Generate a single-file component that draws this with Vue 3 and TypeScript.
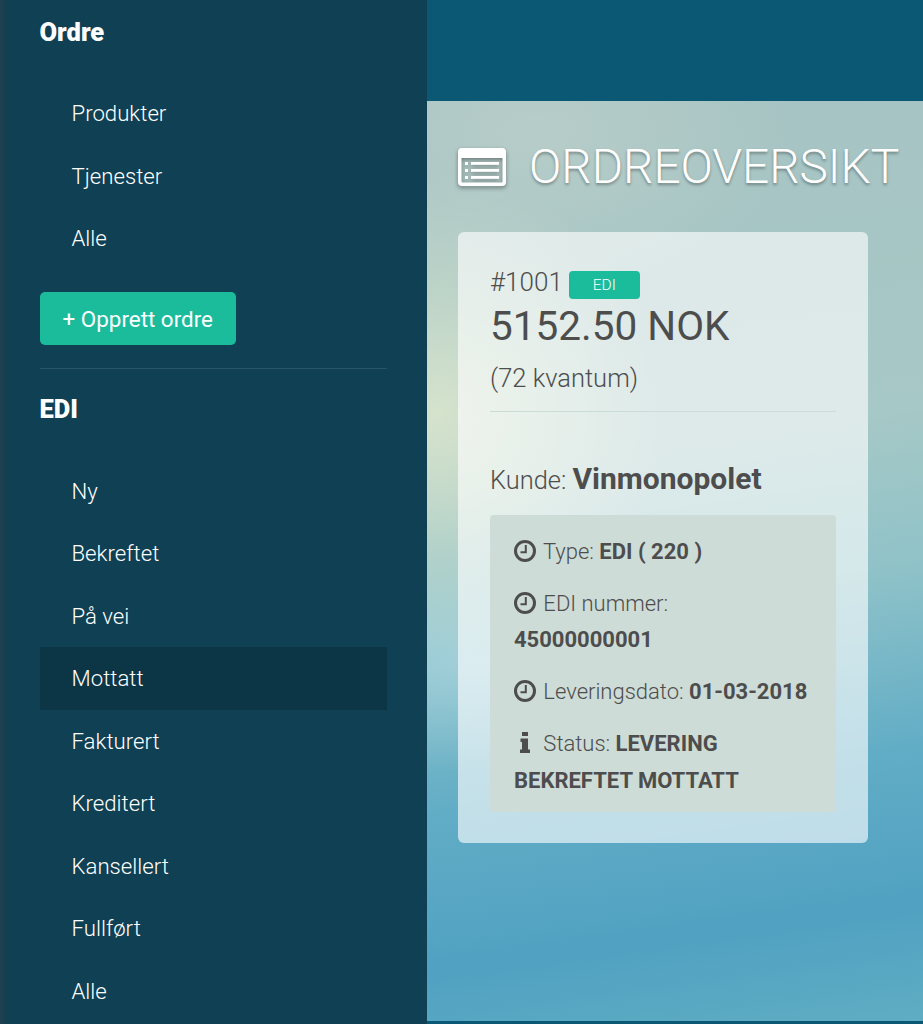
<script setup lang="ts">
const orderLinks = ["Produkter", "Tjenester", "Alle"];
const ediLinks = ["Ny", "Bekreftet", "På vei", "Mottatt", "Fakturert", "Kreditert", "Kansellert", "Fullført", "Alle"];
const activeLink = "Mottatt";
</script>

<template>
  <div class="layout">
    <aside class="sidebar">
      <h3 class="side-title first">Ordre</h3>
      <ul class="nav">
        <li v-for="link in orderLinks" :key="link"><a>{{ link }}</a></li>
      </ul>
      <button class="create-btn" type="button">+ Opprett ordre</button>
      <hr class="side-rule" />
      <h3 class="side-title">EDI</h3>
      <ul class="nav">
        <li v-for="link in ediLinks" :key="link" :class="{ active: link === activeLink }"><a>{{ link }}</a></li>
      </ul>
    </aside>

    <div class="main">
      <div class="topbar"></div>
      <div class="content">
        <h1 class="page-title">
          <svg class="title-icon" viewBox="0 0 48 38" aria-hidden="true">
            <path fill="#fff" fill-rule="evenodd" d="M4 0h40a4 4 0 0 1 4 4v30a4 4 0 0 1-4 4H4a4 4 0 0 1-4-4V4a4 4 0 0 1 4-4zM3.500 10v23.500a1 1 0 0 0 1 1h39a1 1 0 0 0 1-1V10z" />
            <rect x="7" y="14" width="3" height="3" fill="#fff" />
            <rect x="7" y="21" width="3" height="3" fill="#fff" />
            <rect x="7" y="28" width="3" height="3" fill="#fff" />
            <rect x="13" y="14" width="28" height="2.800" fill="#fff" />
            <rect x="13" y="21" width="28" height="2.800" fill="#fff" />
            <rect x="13" y="28" width="28" height="2.800" fill="#fff" />
          </svg>
          <span>ORDREOVERSIKT</span>
        </h1>

        <section class="card">
          <div class="order-no">#1001 <span class="badge">EDI</span></div>
          <div class="amount">5152.50 NOK</div>
          <div class="quantity">(72 kvantum)</div>
          <hr class="card-rule" />
          <div class="customer">Kunde: <strong>Vinmonopolet</strong></div>

          <div class="details">
            <p>
              <svg class="icon" viewBox="0 0 22 22" aria-hidden="true">
                <circle cx="11" cy="11" r="9.500" fill="none" stroke="currentColor" stroke-width="3" />
                <path d="M11.800 5v7.300H6.500" fill="none" stroke="currentColor" stroke-width="2" />
              </svg>
              Type: <strong>EDI ( 220 )</strong>
            </p>
            <p>
              <svg class="icon" viewBox="0 0 22 22" aria-hidden="true">
                <circle cx="11" cy="11" r="9.500" fill="none" stroke="currentColor" stroke-width="3" />
                <path d="M11.800 5v7.300H6.500" fill="none" stroke="currentColor" stroke-width="2" />
              </svg>
              EDI nummer:<br /><strong>45000000001</strong>
            </p>
            <p>
              <svg class="icon" viewBox="0 0 22 22" aria-hidden="true">
                <circle cx="11" cy="11" r="9.500" fill="none" stroke="currentColor" stroke-width="3" />
                <path d="M11.800 5v7.300H6.500" fill="none" stroke="currentColor" stroke-width="2" />
              </svg>
              Leveringsdato: <strong>01-03-2018</strong>
            </p>
            <p>
              <svg class="icon" viewBox="0 0 22 22" aria-hidden="true">
                <path fill="currentColor" d="M8 0h6v4H8zM6.500 6.500H14V17.500h2V21H6v-3.500h2v-7.500H6.500z" />
              </svg>
              Status: <strong>LEVERING BEKREFTET MOTTATT</strong>
            </p>
          </div>
        </section>
      </div>
    </div>
  </div>
</template>

<style scoped>
.layout {
  display: flex;
  height: 1024px;
  overflow: hidden;
  font-family: Roboto, "Liberation Sans", sans-serif;
}

.sidebar {
  width: 427px;
  flex-shrink: 0;
  box-sizing: border-box;
  padding: 0 40px 0 39.500px;
  color: #fff;
  background: linear-gradient(to right, #23404f 0, #12404f 6px, #0f4054 12px);
}

.side-title {
  margin: 0;
  font-size: 25.500px;
  font-weight: 900;
  line-height: 32px;
  padding: 24px 0 35px;
}

.side-title.first {
  padding-top: 16px;
  padding-bottom: 34px;
}

.nav {
  list-style: none;
  margin: 0;
  padding: 0;
}

.nav li {
  height: 62.500px;
  display: flex;
  align-items: center;
  padding-left: 32px;
  font-size: 22.200px;
  font-weight: 300;
}

.nav li.active {
  background: #0c3646;
}

.create-btn {
  display: block;
  margin-top: 22px;
  width: 196.500px;
  height: 53px;
  padding: 1px 0 0;
  border: none;
  border-radius: 5px;
  background: #1abc9c;
  color: #fff;
  font-family: inherit;
  font-size: 22.400px;
  font-weight: 400;
}

.side-rule {
  margin: 23px 0 0;
  border: none;
  border-top: 1px solid #2a5467;
}

.main {
  flex: 1;
  display: flex;
  flex-direction: column;
  min-width: 0;
  background: #0b5875;
}

.topbar {
  height: 101px;
  flex-shrink: 0;
}

.content {
  height: 920px;
  padding: 0 55px 0 31px;
  background:
    radial-gradient(ellipse 260px 170px at 22% 3%, rgba(200, 214, 206, 0.5), transparent),
    radial-gradient(ellipse 230px 240px at 2% 34%, rgba(236, 240, 208, 0.68), transparent),
    radial-gradient(ellipse 280px 110px at 10% 61%, rgba(195, 228, 238, 0.45), transparent),
    linear-gradient(172deg, #a6c3c3 0%, #a6c8c6 38%, #8fc2c8 54%, #62adc6 72%, #50a1c2 88%, #5fadc3 100%);
}

.page-title {
  margin: 0;
  display: flex;
  align-items: center;
  gap: 23px;
  height: 131px;
  color: #fff;
  font-size: 47.800px;
  font-weight: 300;
  white-space: nowrap;
  text-shadow: 0 2px 3px rgba(0, 0, 0, 0.35);
}

.title-icon {
  width: 48px;
  height: 38px;
  flex-shrink: 0;
  filter: drop-shadow(0 2px 2px rgba(0, 0, 0, 0.4));
}

.card {
  box-sizing: border-box;
  width: 410px;
  height: 611px;
  padding: 32px;
  border-radius: 6px;
  background: rgba(255, 255, 255, 0.62);
  color: #4d4d4d;
}

.order-no {
  display: flex;
  align-items: center;
  gap: 6px;
  height: 36px;
  font-size: 26px;
  font-weight: 300;
}

.badge {
  display: inline-flex;
  align-items: center;
  justify-content: center;
  width: 71px;
  height: 28px;
  margin-top: 6px;
  border-radius: 4px;
  background: #1abc9c;
  color: #fff;
  font-size: 15.500px;
  font-weight: 300;
}

.amount {
  font-size: 40.500px;
  font-weight: 400;
  line-height: 50px;
  margin-top: 1px;
}

.quantity {
  margin-top: 9px;
  font-size: 25.500px;
  font-weight: 300;
  line-height: 36px;
}

.card-rule {
  margin: 15px 0 0;
  border: none;
  border-top: 1px solid #c9dcd8;
}

.customer {
  margin-top: 46px;
  font-size: 25.400px;
  font-weight: 300;
  line-height: 42px;
}

.customer strong {
  font-size: 30px;
  font-weight: 700;
}

.details {
  box-sizing: border-box;
  margin-top: 14px;
  height: 297px;
  padding: 18.750px 24px;
  border-radius: 4px;
  background: #cddcd6;
  font-size: 22px;
  font-weight: 300;
  line-height: 36.500px;
}

.details p {
  margin: 0 0 15.500px;
}

.details strong {
  font-weight: 700;
}

.icon {
  display: inline-block;
  width: 22px;
  height: 22px;
  margin-right: 2px;
  vertical-align: -3px;
}
</style>

<style>
html,
body {
  margin: 0;
  background: #0f4054;
}
</style>
